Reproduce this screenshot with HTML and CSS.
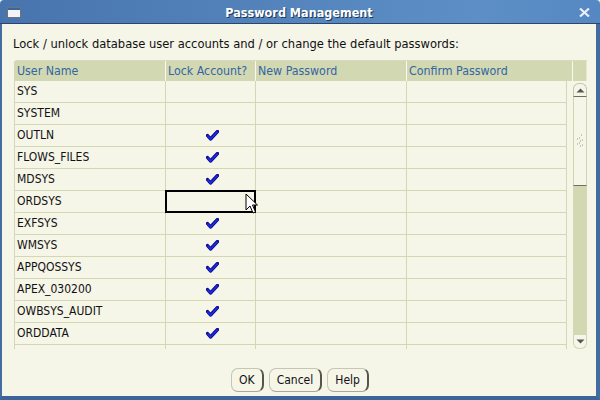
FILE: index.html
```html
<!DOCTYPE html>
<html>
<head>
<meta charset="utf-8">
<link rel="stylesheet" href="styles.css">
</head>
<body>
<div class="window">
  <div class="titlebar">
    <span class="win-icon"><span class="win-icon-bar"></span></span>
    <span class="title">Password Management</span>
    <svg class="close" width="11" height="9" viewBox="0 0 11 9"><path d="M1 0.5 L10 8.5 M10 0.5 L1 8.5" stroke="#e8eef6" stroke-width="2.2" fill="none"/></svg>
  </div>
  <div class="frame">
    <p class="intro">Lock / unlock database user accounts and / or change the default passwords:</p>
    <div class="table">
      <div class="thead">
        <div class="th c1">User Name</div>
        <div class="th c2">Lock Account?</div>
        <div class="th c3">New Password</div>
        <div class="th c4h">Confirm Password</div>
        <div class="th sh"></div>
      </div>
      <div class="tbody">
        <div class="rows">
          <div class="row"><div class="td c1">SYS</div><div class="td c2"></div><div class="td c3"></div><div class="td c4"></div></div>
          <div class="row"><div class="td c1">SYSTEM</div><div class="td c2"></div><div class="td c3"></div><div class="td c4"></div></div>
          <div class="row"><div class="td c1">OUTLN</div><div class="td c2"><svg class="chk" width="13" height="11" viewBox="0 0 13 11"><path d="M1.5 5.5 L4.5 9 L11.5 1.5" stroke="#0a0a90" stroke-width="3.4" fill="none" stroke-linecap="round" stroke-linejoin="round"/><path d="M1.5 5.5 L4.5 9 L11.5 1.5" stroke="#1f2ee0" stroke-width="1.6" fill="none"/></svg></div><div class="td c3"></div><div class="td c4"></div></div>
          <div class="row"><div class="td c1">FLOWS_FILES</div><div class="td c2"><svg class="chk" width="13" height="11" viewBox="0 0 13 11"><path d="M1.5 5.5 L4.5 9 L11.5 1.5" stroke="#0a0a90" stroke-width="3.4" fill="none" stroke-linecap="round" stroke-linejoin="round"/><path d="M1.5 5.5 L4.5 9 L11.5 1.5" stroke="#1f2ee0" stroke-width="1.6" fill="none"/></svg></div><div class="td c3"></div><div class="td c4"></div></div>
          <div class="row"><div class="td c1">MDSYS</div><div class="td c2"><svg class="chk" width="13" height="11" viewBox="0 0 13 11"><path d="M1.5 5.5 L4.5 9 L11.5 1.5" stroke="#0a0a90" stroke-width="3.4" fill="none" stroke-linecap="round" stroke-linejoin="round"/><path d="M1.5 5.5 L4.5 9 L11.5 1.5" stroke="#1f2ee0" stroke-width="1.6" fill="none"/></svg></div><div class="td c3"></div><div class="td c4"></div></div>
          <div class="row"><div class="td c1">ORDSYS</div><div class="td c2 focus"><svg class="cursor" width="13" height="22" viewBox="0 0 13 22"><path d="M1 1 L1 17 L5 13 L8 20 L10.5 19 L7.5 12 L12.5 12 Z" fill="#ffffff" stroke="#000" stroke-width="1"/></svg></div><div class="td c3"></div><div class="td c4"></div></div>
          <div class="row"><div class="td c1">EXFSYS</div><div class="td c2"><svg class="chk" width="13" height="11" viewBox="0 0 13 11"><path d="M1.5 5.5 L4.5 9 L11.5 1.5" stroke="#0a0a90" stroke-width="3.4" fill="none" stroke-linecap="round" stroke-linejoin="round"/><path d="M1.5 5.5 L4.5 9 L11.5 1.5" stroke="#1f2ee0" stroke-width="1.6" fill="none"/></svg></div><div class="td c3"></div><div class="td c4"></div></div>
          <div class="row"><div class="td c1">WMSYS</div><div class="td c2"><svg class="chk" width="13" height="11" viewBox="0 0 13 11"><path d="M1.5 5.5 L4.5 9 L11.5 1.5" stroke="#0a0a90" stroke-width="3.4" fill="none" stroke-linecap="round" stroke-linejoin="round"/><path d="M1.5 5.5 L4.5 9 L11.5 1.5" stroke="#1f2ee0" stroke-width="1.6" fill="none"/></svg></div><div class="td c3"></div><div class="td c4"></div></div>
          <div class="row"><div class="td c1">APPQOSSYS</div><div class="td c2"><svg class="chk" width="13" height="11" viewBox="0 0 13 11"><path d="M1.5 5.5 L4.5 9 L11.5 1.5" stroke="#0a0a90" stroke-width="3.4" fill="none" stroke-linecap="round" stroke-linejoin="round"/><path d="M1.5 5.5 L4.5 9 L11.5 1.5" stroke="#1f2ee0" stroke-width="1.6" fill="none"/></svg></div><div class="td c3"></div><div class="td c4"></div></div>
          <div class="row"><div class="td c1">APEX_030200</div><div class="td c2"><svg class="chk" width="13" height="11" viewBox="0 0 13 11"><path d="M1.5 5.5 L4.5 9 L11.5 1.5" stroke="#0a0a90" stroke-width="3.4" fill="none" stroke-linecap="round" stroke-linejoin="round"/><path d="M1.5 5.5 L4.5 9 L11.5 1.5" stroke="#1f2ee0" stroke-width="1.6" fill="none"/></svg></div><div class="td c3"></div><div class="td c4"></div></div>
          <div class="row"><div class="td c1">OWBSYS_AUDIT</div><div class="td c2"><svg class="chk" width="13" height="11" viewBox="0 0 13 11"><path d="M1.5 5.5 L4.5 9 L11.5 1.5" stroke="#0a0a90" stroke-width="3.4" fill="none" stroke-linecap="round" stroke-linejoin="round"/><path d="M1.5 5.5 L4.5 9 L11.5 1.5" stroke="#1f2ee0" stroke-width="1.6" fill="none"/></svg></div><div class="td c3"></div><div class="td c4"></div></div>
          <div class="row"><div class="td c1">ORDDATA</div><div class="td c2"><svg class="chk" width="13" height="11" viewBox="0 0 13 11"><path d="M1.5 5.5 L4.5 9 L11.5 1.5" stroke="#0a0a90" stroke-width="3.4" fill="none" stroke-linecap="round" stroke-linejoin="round"/><path d="M1.5 5.5 L4.5 9 L11.5 1.5" stroke="#1f2ee0" stroke-width="1.6" fill="none"/></svg></div><div class="td c3"></div><div class="td c4"></div></div>
          <div class="row"><div class="td c1"></div><div class="td c2"></div><div class="td c3"></div><div class="td c4"></div></div>
        </div>
        <div class="scrollbar">
          <div class="sb-up"><svg width="9" height="5" viewBox="0 0 9 5"><path d="M0.5 4.5 L4.5 0.5 L8.5 4.5 Z" fill="#555"/></svg></div>
          <div class="sb-thumb"><svg width="8" height="14" viewBox="0 0 8 14"><path d="M5 1h1M1 5h1M3 4h1M6 6h1M4 7h1M1 10h1M3 9h1M6 11h1M4 12h1" stroke="#9a9a70" stroke-width="1"/></svg></div>
          <div class="sb-track"></div>
          <div class="sb-down"><svg width="9" height="5" viewBox="0 0 9 5"><path d="M0.5 0.5 L8.5 0.5 L4.5 4.5 Z" fill="#555"/></svg></div>
        </div>
      </div>
    </div>
    <div class="buttons">
      <button class="btn">OK</button>
      <button class="btn">Cancel</button>
      <button class="btn">Help</button>
    </div>
  </div>
</div>
</body>
</html>
```
FILE: styles.css
```css
html, body {
  margin: 0;
  padding: 0;
}
body {
  width: 600px;
  height: 400px;
  overflow: hidden;
  font-family: "DejaVu Sans Condensed", "DejaVu Sans", sans-serif;
  font-stretch: condensed;
  background: #f5f5e8;
}
.window {
  width: 600px;
  height: 400px;
  display: flex;
  flex-direction: column;
}
.titlebar {
  height: 23px;
  flex: none;
  border-bottom: 1px solid #2b4669;
  background: linear-gradient(to right, #4874ad, #5d8fc6 80%, #5588c2);
  border-radius: 4px 4px 0 0;
  display: flex;
  align-items: center;
}
.win-icon {
  width: 14px;
  height: 11px;
  margin-left: 7px;
  margin-top: 2px;
  background: #f4f4f4;
  border: 1px solid #6a7480;
  box-sizing: border-box;
  display: flex;
  flex-direction: column;
}
.win-icon-bar {
  height: 2px;
  background: #3a66a0;
}
.title {
  flex: 1;
  text-align: center;
  color: #ffffff;
  font-weight: bold;
  font-size: 12.5px;
  text-shadow: 1px 1px 0 #1f3655;
  margin-top: 1px;
  margin-left: -2px;
}
.close {
  margin-right: 10px;
  margin-top: 2px;
}
.frame {
  flex: 1;
  border-left: 2px solid #436ca0;
  border-right: 4px solid #436ca0;
  border-bottom: 4px solid #3d6496;
  background: #f5f5e8;
  display: flex;
  flex-direction: column;
}
.intro {
  margin: 12px 0 0 11px;
  font-size: 12.8px;
  line-height: 15px;
  color: #111;
  height: 15px;
}
.table {
  margin: 9px 0 0 12px;
  width: 572px;
  border-left: 1px solid #d3d7b5;
  border-top: 1px solid #d8dcbc;
  border-top-left-radius: 3px;
}
.thead {
  display: flex;
  height: 20px;
}
.th {
  box-sizing: border-box;
  background: #d2d8b1;
  border-right: 1px solid #f8f8ee;
  color: #3465a4;
  font-size: 12.3px;
  line-height: 20px;
  padding-left: 2px;
  white-space: nowrap;
}
.th.c1 { width: 151px; }
.th.c2 { width: 90px; }
.th.c3 { width: 151px; }
.th.c4h { width: 166px; }
.th.sh { width: 14px; border-right: 1px solid #e6e8d4; }
.tbody {
  display: flex;
  height: 268px;
}
.rows {
  width: 558px;
  height: 268px;
  overflow: hidden;
}
.row {
  display: flex;
  height: 22px;
}
.td {
  box-sizing: border-box;
  height: 22px;
  border-right: 1px solid #d3d8b2;
  border-bottom: 1px solid #d3d8b2;
  font-size: 12px;
  line-height: 21px;
  color: #111;
  padding-left: 2px;
  white-space: nowrap;
}
.td.c1 { width: 151px; }
.td.c2 {
  width: 90px;
  display: flex;
  justify-content: center;
  align-items: center;
  padding-left: 0;
}
.td.c3 { width: 151px; }
.td.c4 { width: 160px; }
.chk { margin-left: 3px; }
.td.focus {
  border: 2px solid #000;
  margin-left: -1px;
  width: 91px;
  height: 23px;
  margin-top: -1px;
  position: relative;
}
.cursor {
  position: absolute;
  left: 78px;
  top: 1px;
}
.scrollbar {
  margin-left: 6px;
  width: 14px;
  display: flex;
  flex-direction: column;
  padding-top: 2px;
}
.sb-up {
  box-sizing: border-box;
  height: 14px;
  border: 1px solid #c4c9a6;
  border-bottom: 1px solid #6d6d5e;
  border-radius: 6px 6px 0 0;
  background: #f5f5e8;
  display: flex;
  justify-content: center;
  align-items: center;
}
.sb-thumb {
  box-sizing: border-box;
  height: 89px;
  border-left: 1px solid #d0d5b0;
  border-right: 1px solid #d0d5b0;
  border-bottom: 1px solid #707060;
  background: #f5f5e8;
  display: flex;
  justify-content: center;
  align-items: center;
}
.sb-track {
  flex: 1;
  background: #d2d8b1;
}
.sb-down {
  box-sizing: border-box;
  height: 14px;
  border: 1px solid #d0d5b0;
  border-top: none;
  border-radius: 0 0 6px 6px;
  background: #f5f5e8;
  display: flex;
  justify-content: center;
  align-items: center;
}
.buttons {
  display: flex;
  justify-content: center;
  gap: 5px;
  margin-top: 19px;
  margin-left: 2px;
}
.btn {
  font-family: "DejaVu Sans Condensed", "DejaVu Sans", sans-serif;
  font-stretch: condensed;
  font-size: 12px;
  height: 24px;
  padding: 0 7px;
  background: #f5f5e8;
  color: #111;
  border: 1px solid #c6c6b2;
  border-right: 2px solid #55554c;
  border-bottom: 1px solid #a8a898;
  border-radius: 7px;
}
```
